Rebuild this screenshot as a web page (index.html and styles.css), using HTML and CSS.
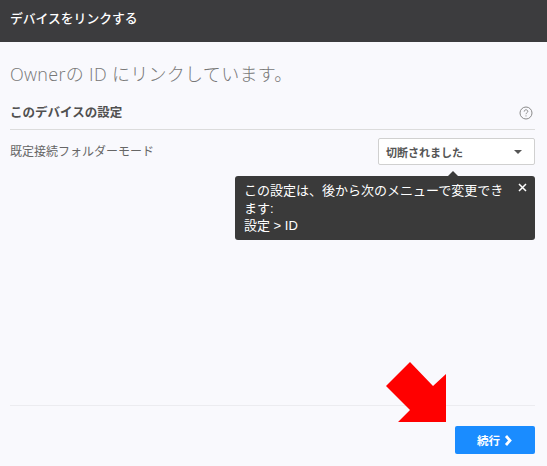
FILE: index.html
```html
<!DOCTYPE html>
<html lang="ja">
<head>
  <meta charset="UTF-8">
  <meta name="viewport" content="width=device-width, initial-scale=1.0">
  <title>デバイスをリンクする</title>
  <link rel="stylesheet" href="styles.css">
</head>

<body>
  <header class="top-bar">
    <h1>デバイスをリンクする</h1>
  </header>

  <main class="content">
    <h2 class="owner-title">Ownerの ID にリンクしています。</h2>

    <div class="section-head">
      <h3>このデバイスの設定</h3>
      <svg class="help-icon" width="14" height="14" viewBox="0 0 14 14">
        <circle cx="7" cy="7" r="6" fill="none" stroke="#8a8a8a" stroke-width="1"/>
        <path d="M5.2 5.6c0-1.1.8-1.8 1.8-1.8s1.8.7 1.8 1.6c0 1.3-1.8 1.4-1.8 2.8" fill="none" stroke="#8a8a8a" stroke-width="1"/>
        <rect x="6.5" y="9.4" width="1" height="1" fill="#8a8a8a"/>
      </svg>
    </div>

    <div class="setting-row">
      <span class="setting-label">既定接続フォルダーモード</span>
      <div class="select-box">
        <span>切断されました</span>
        <i class="select-caret"></i>
      </div>
    </div>

    <div class="tooltip">
      <i class="tooltip-tip"></i>
      <p>この設定は、後から次のメニューで変更できます:<br>設定 &gt; ID</p>
      <svg class="tooltip-close" width="9" height="9" viewBox="0 0 9 9">
        <path d="M1 1l7 7M8 1l-7 7" stroke="#fff" stroke-width="1.5"/>
      </svg>
    </div>

    <footer class="actions">
      <button class="next-btn">続行
        <svg width="9" height="11" viewBox="0 0 9 11">
          <path d="M2 1l4 4.5-4 4.5" fill="none" stroke="#fff" stroke-width="2.8"/>
        </svg>
      </button>
    </footer>
  </main>

  <svg class="red-arrow" width="60" height="60" viewBox="0 0 60 60">
    <path d="M24 0L47 24 60 12V60H12L24 48 0 24Z" fill="#ff0000"/>
  </svg>
</body>
</html>
```

FILE: styles.css
```css
body {
  font-family: "Liberation Sans", "Noto Sans CJK JP", sans-serif;
  margin: 0;
  padding: 0;
  background-color: #f9f9fd;
  color: #444;
  height: 466px;
  overflow: hidden;
  position: relative;
}

.top-bar {
  background-color: #3c3c3e;
  height: 42px;
  padding: 0 10px;
  display: flex;
  align-items: center;
  box-sizing: border-box;
  padding-bottom: 7px;
}

.top-bar h1 {
  margin: 0;
  color: white;
  font-size: 12.8px;
  font-weight: 500;
}

.content {
  padding: 0 12px 0 10px;
  height: 424px;
  box-sizing: border-box;
  display: flex;
  flex-direction: column;
}

.owner-title {
  margin: 19px 0 0;
  font-family: "Open Sans", "Noto Sans CJK JP", sans-serif;
  font-size: 18px;
  line-height: 26px;
  letter-spacing: 0.3px;
  font-weight: 300;
  color: #777;
}

.section-head {
  display: flex;
  justify-content: space-between;
  align-items: center;
  margin-top: 17px;
  padding-bottom: 7px;
  border-bottom: 1px solid #dcdcdc;
}

.section-head h3 {
  margin: 0;
  font-size: 12.5px;
  line-height: 18px;
  font-weight: 700;
  color: #505050;
}

.help-icon {
  margin-right: 2px;
}

.setting-row {
  display: flex;
  justify-content: space-between;
  margin-top: 8px;
}

.setting-label {
  font-size: 12px;
  line-height: 28px;
  color: #666;
}

.select-box {
  width: 157px;
  height: 27px;
  box-sizing: border-box;
  background-color: white;
  border: 1px solid #d0d0d0;
  border-radius: 2px;
  padding: 0 12px 0 7px;
  display: flex;
  justify-content: space-between;
  align-items: center;
  font-size: 11px;
  font-weight: 700;
  color: #555;
}

.select-caret {
  width: 0;
  height: 0;
  border-left: 4px solid transparent;
  border-right: 4px solid transparent;
  border-top: 4px solid #555;
}

.tooltip {
  position: relative;
  align-self: flex-end;
  width: 300px;
  height: 64px;
  margin-top: 10px;
  box-sizing: border-box;
  background-color: #3a3a3a;
  border-radius: 3px;
  padding: 6px 30px 0 9px;
  color: white;
}

.tooltip p {
  margin: 0;
  font-size: 13px;
  line-height: 17.5px;
}

.tooltip-tip {
  position: absolute;
  top: -5px;
  left: 213px;
  width: 0;
  height: 0;
  border-left: 5px solid transparent;
  border-right: 5px solid transparent;
  border-bottom: 5px solid #3a3a3a;
}

.tooltip-close {
  position: absolute;
  top: 7px;
  right: 8px;
}

.actions {
  margin-top: auto;
  border-top: 1px solid #ececf0;
  padding: 20px 0 12px;
  display: flex;
  justify-content: flex-end;
}

.next-btn {
  width: 80px;
  height: 28px;
  border: none;
  border-radius: 2px;
  background-color: #1a8cff;
  color: white;
  font-family: inherit;
  font-size: 11.5px;
  font-weight: 700;
  display: flex;
  align-items: center;
  justify-content: center;
  gap: 4px;
  cursor: pointer;
}

.red-arrow {
  position: absolute;
  left: 386px;
  top: 362px;
}
```
